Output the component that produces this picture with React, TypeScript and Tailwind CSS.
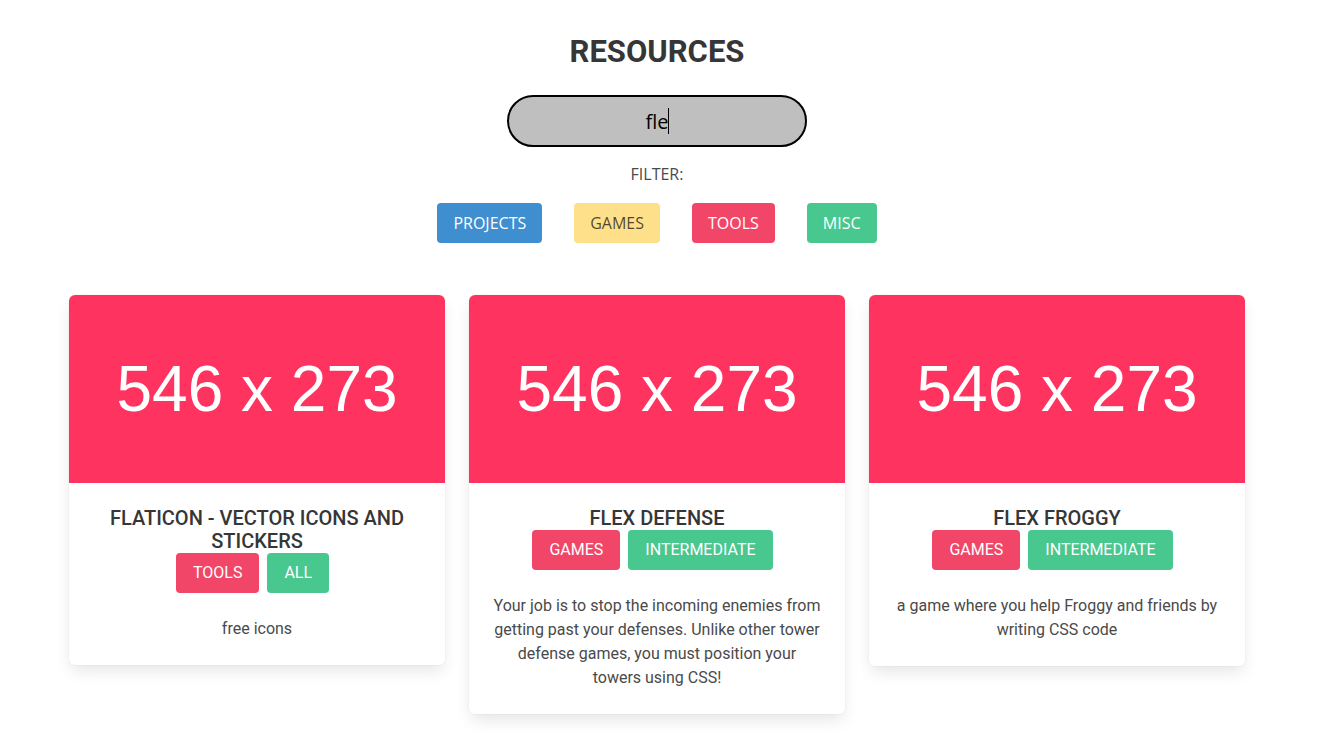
import { useState } from 'react'

type Resource = {
    id: number
    title: string
    tags: { label: string; color: string }[]
    description: string
}

const resources: Resource[] = [
    {
        id: 1,
        title: 'FLATICON - VECTOR ICONS AND STICKERS',
        tags: [
            { label: 'TOOLS', color: 'bg-[#f14668]' },
            { label: 'ALL', color: 'bg-[#48c78e]' },
        ],
        description: 'free icons',
    },
    {
        id: 2,
        title: 'FLEX DEFENSE',
        tags: [
            { label: 'GAMES', color: 'bg-[#f14668]' },
            { label: 'INTERMEDIATE', color: 'bg-[#48c78e]' },
        ],
        description:
            'Your job is to stop the incoming enemies from getting past your defenses. Unlike other tower defense games, you must position your towers using CSS!',
    },
    {
        id: 3,
        title: 'FLEX FROGGY',
        tags: [
            { label: 'GAMES', color: 'bg-[#f14668]' },
            { label: 'INTERMEDIATE', color: 'bg-[#48c78e]' },
        ],
        description: 'a game where you help Froggy and friends by writing CSS code',
    },
]

const filters = [
    { label: 'PROJECTS', className: 'bg-[#3e8ed0] text-white' },
    { label: 'GAMES', className: 'bg-[#ffe08a] text-[#000000b3]' },
    { label: 'TOOLS', className: 'bg-[#f14668] text-white' },
    { label: 'MISC', className: 'bg-[#48c78e] text-white' },
]

export default function App() {
    const [search, setSearch] = useState('fle')

    return (
        <div className="min-h-screen bg-white font-['Roboto',sans-serif] text-[#363636]">
            <div className="flex flex-col items-center pt-[32px] pr-[5px]">
                <h1 className="text-[31px] leading-[40px] font-bold text-[#363636]">RESOURCES</h1>

                <div className="relative mt-[23px]">
                    <input
                        autoFocus
                        value={search}
                        onChange={e => setSearch(e.target.value)}
                        className="w-[300px] h-[52px] rounded-full border-2 border-black bg-[#bfbfbf] text-center text-[20px] text-black caret-transparent outline-none font-['Open_Sans',sans-serif]"
                    />
                    {/* каретка */}
                    <span className="absolute left-[161px] top-[13px] h-[26px] w-px bg-black pointer-events-none" />
                </div>

                <p className="mt-[17px] text-[16px] leading-[20px] text-[#4a4a4a] font-['Open_Sans',sans-serif]">FILTER:</p>

                <div className="mt-[19px] flex gap-[32px] font-['Open_Sans',sans-serif]">
                    {filters.map(f => (
                        <button
                            key={f.label}
                            className={`h-[40px] px-[16px] rounded-[4px] text-[16px] ${f.className}`}
                        >
                            {f.label}
                        </button>
                    ))}
                </div>
            </div>

            {/* карточки ресурсов */}
            <div className="mt-[52px] flex items-start gap-[24px] pl-[69px]">
                {resources.map(r => (
                    <div
                        key={r.id}
                        className="w-[376px] bg-white rounded-[6px] overflow-hidden shadow-[0_8px_16px_-2px_rgba(10,10,10,0.1),0_0_0_1px_rgba(10,10,10,0.02)]"
                    >
                        <div className="h-[188px] bg-[#ff335f] flex items-center justify-center">
                            <span className="text-white text-[64px] font-['Liberation_Sans',Arial,sans-serif]">546 x 273</span>
                        </div>
                        <div className="px-[24px] pt-[24px] pb-[24px] text-center">
                            <h2 className="text-[20px] leading-[23px] font-medium text-[#363636]">{r.title}</h2>
                            <div className="flex justify-center gap-[8px] pr-[9px]">
                                {r.tags.map(t => (
                                    <span
                                        key={t.label}
                                        className={`h-[40px] px-[17px] flex items-center rounded-[4px] text-white text-[16px] ${t.color}`}
                                    >
                                        {t.label}
                                    </span>
                                ))}
                            </div>
                            <p className="mt-[24px] text-[16px] leading-[24px] text-[#4a4a4a]">{r.description}</p>
                        </div>
                    </div>
                ))}
            </div>
        </div>
    )
}
